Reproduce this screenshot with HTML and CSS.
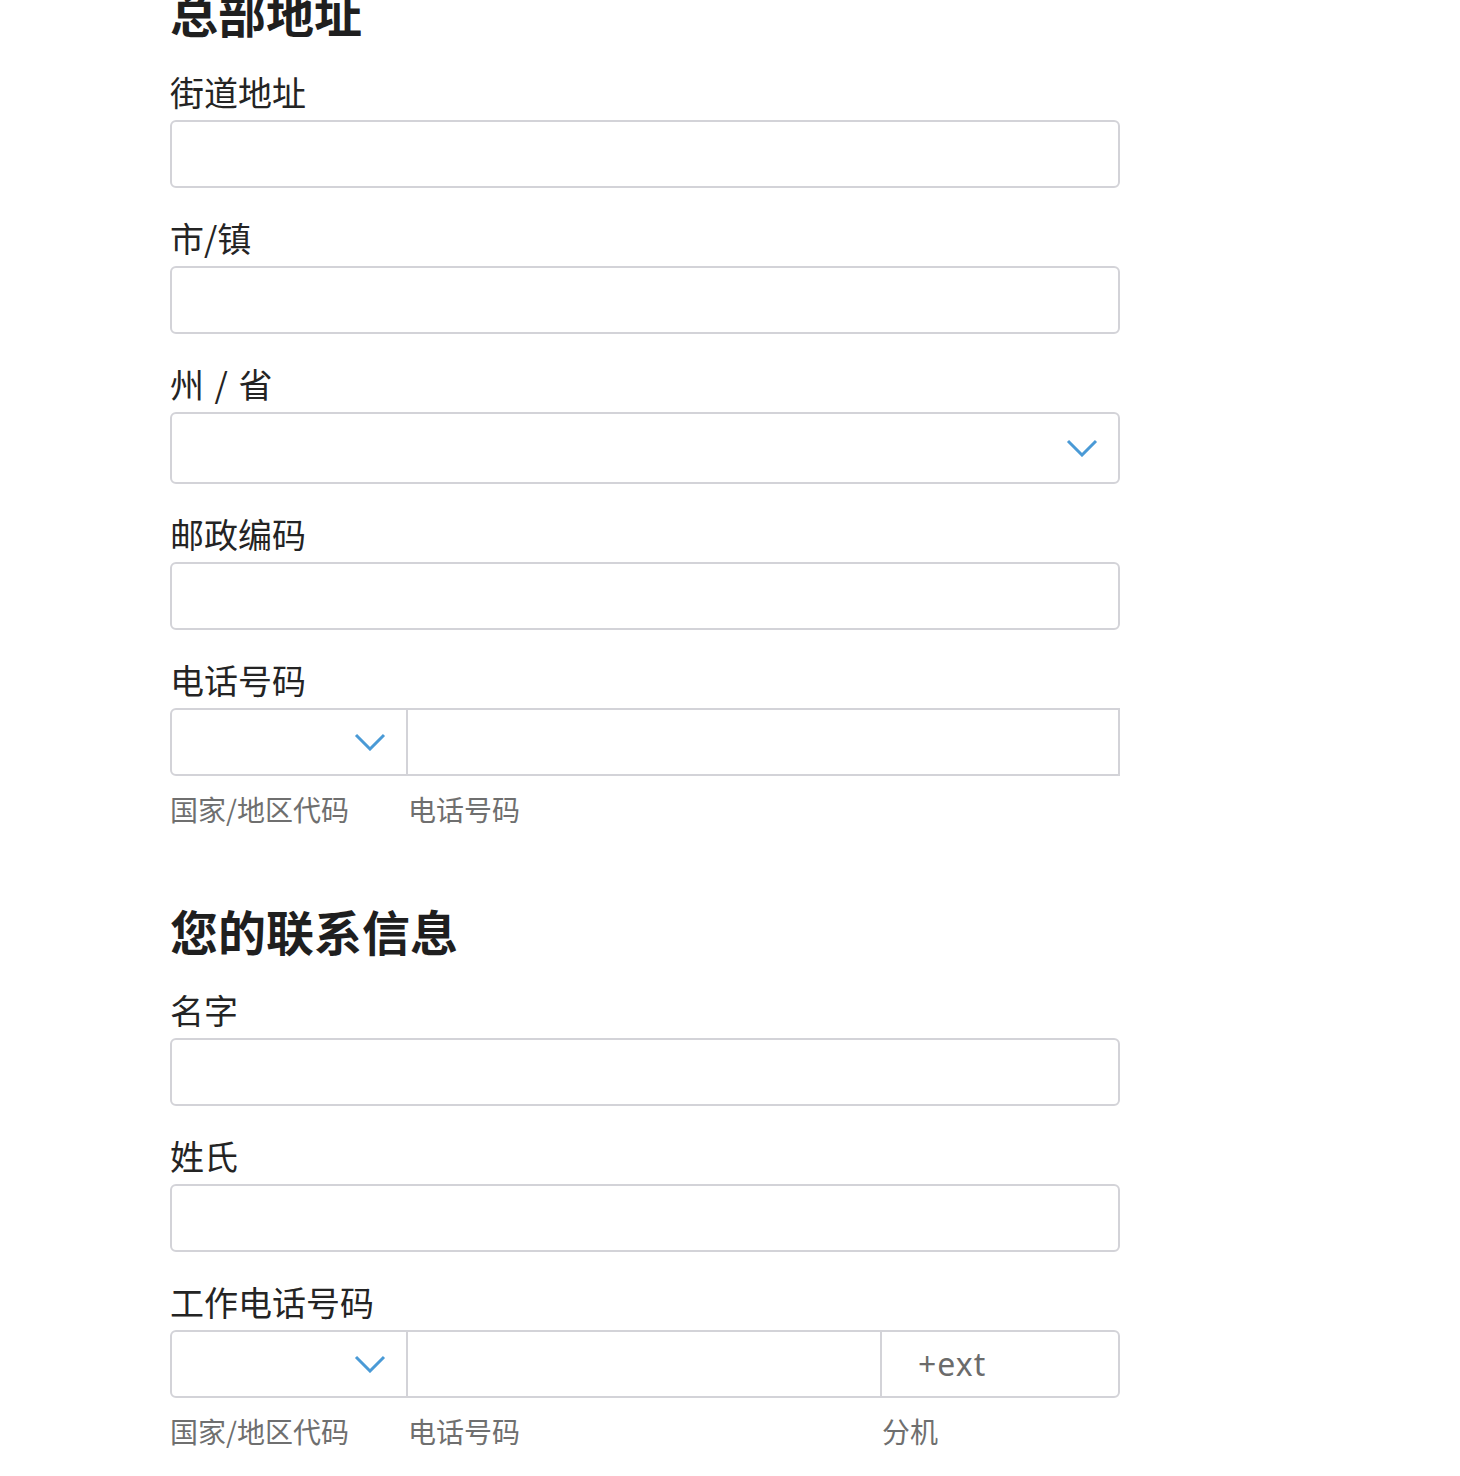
FILE: index.html
```html
<!DOCTYPE html>
<html lang="zh-CN">
<head>
<meta charset="utf-8">
<title>总部地址</title>
<link rel="stylesheet" href="styles.css">
</head>
<body>
<main class="form">
  <section class="group">
    <h2 class="group-title">总部地址</h2>
    <div class="field">
      <label class="field-label">街道地址</label>
      <input class="text-input" type="text">
    </div>
    <div class="field">
      <label class="field-label">市/镇</label>
      <input class="text-input" type="text">
    </div>
    <div class="field">
      <label class="field-label field-label-spaced">州 / 省</label>
      <div class="select">
        <svg class="chevron" viewBox="0 0 32 18" width="32" height="18"><polyline points="2,2 16,16 30,2"/></svg>
      </div>
    </div>
    <div class="field">
      <label class="field-label">邮政编码</label>
      <input class="text-input" type="text">
    </div>
    <div class="field">
      <label class="field-label">电话号码</label>
      <div class="phone-row">
        <div class="seg seg-code">
          <svg class="chevron" viewBox="0 0 32 18" width="32" height="18"><polyline points="2,2 16,16 30,2"/></svg>
        </div>
        <div class="seg seg-number seg-square"></div>
      </div>
      <div class="helper-row">
        <span class="helper helper-code">国家/地区代码</span>
        <span class="helper helper-number">电话号码</span>
      </div>
    </div>
  </section>

  <section class="group group-next">
    <h2 class="group-title">您的联系信息</h2>
    <div class="field">
      <label class="field-label">名字</label>
      <input class="text-input" type="text">
    </div>
    <div class="field">
      <label class="field-label">姓氏</label>
      <input class="text-input" type="text">
    </div>
    <div class="field">
      <label class="field-label">工作电话号码</label>
      <div class="phone-row">
        <div class="seg seg-code">
          <svg class="chevron" viewBox="0 0 32 18" width="32" height="18"><polyline points="2,2 16,16 30,2"/></svg>
        </div>
        <div class="seg seg-number seg-mid"></div>
        <div class="seg seg-ext"><span class="placeholder">+ext</span></div>
      </div>
      <div class="helper-row">
        <span class="helper helper-code">国家/地区代码</span>
        <span class="helper helper-number">电话号码</span>
        <span class="helper helper-ext">分机</span>
      </div>
    </div>
  </section>
</main>
</body>
</html>
```

FILE: styles.css
```css
* { box-sizing: border-box; }

html, body {
  margin: 0;
  padding: 0;
  background: #ffffff;
}

body {
  font-family: "Noto Sans CJK SC", "Noto Sans", "Liberation Sans", sans-serif;
  color: #222222;
  overflow: hidden;
}

.form {
  width: 950px;
  margin: -16px 0 0 170px;
}

.group-title {
  margin: 0 0 32px 0;
  font-size: 48px;
  line-height: 56px;
  font-weight: 700;
  color: #1f1f1f;
}

.group-next {
  margin-top: 75px;
}

.field {
  margin-bottom: 30px;
}

.field:last-child {
  margin-bottom: 0;
}

.field-label {
  display: block;
  font-size: 34px;
  line-height: 40px;
  margin-bottom: 8px;
  color: #242424;
}

.field-label-spaced {
  word-spacing: 3px;
}

.text-input {
  display: block;
  width: 100%;
  height: 68px;
  margin: 0;
  padding: 0 20px;
  border: 2px solid #d3d3d8;
  border-radius: 6px;
  background: #fff;
  font: inherit;
  outline: none;
}

.select {
  height: 72px;
  border: 2px solid #d3d3d8;
  border-radius: 6px;
  display: flex;
  align-items: center;
  justify-content: flex-end;
  padding-right: 20px;
}

.chevron {
  display: block;
  fill: none;
  stroke: #4a9ad6;
  stroke-width: 3;
  stroke-linecap: butt;
  stroke-linejoin: miter;
}

.phone-row {
  display: flex;
  height: 68px;
}

.seg {
  height: 68px;
  border: 2px solid #d3d3d8;
  background: #fff;
}

.seg-code {
  width: 238px;
  flex: none;
  border-radius: 6px 0 0 6px;
  display: flex;
  align-items: center;
  justify-content: flex-end;
  padding-right: 20px;
}

.seg-number {
  flex: 1;
  margin-left: -2px;
}

.seg-ext {
  width: 240px;
  flex: none;
  margin-left: -2px;
  border-radius: 0 6px 6px 0;
  display: flex;
  align-items: center;
  padding-left: 36px;
}

.placeholder {
  font-size: 32px;
  line-height: 36px;
  letter-spacing: 1px;
  color: #6b6b6b;
  font-family: "Noto Sans", "Liberation Sans", sans-serif;
}

.helper-row {
  display: flex;
  margin-top: 15px;
}

.helper {
  font-size: 28px;
  line-height: 36px;
  color: #6f6f6f;
}

.helper-code {
  width: 238px;
  flex: none;
}

.helper-number {
  flex: 1;
}

.helper-ext {
  width: 240px;
  flex: none;
  padding-left: 2px;
}
```
